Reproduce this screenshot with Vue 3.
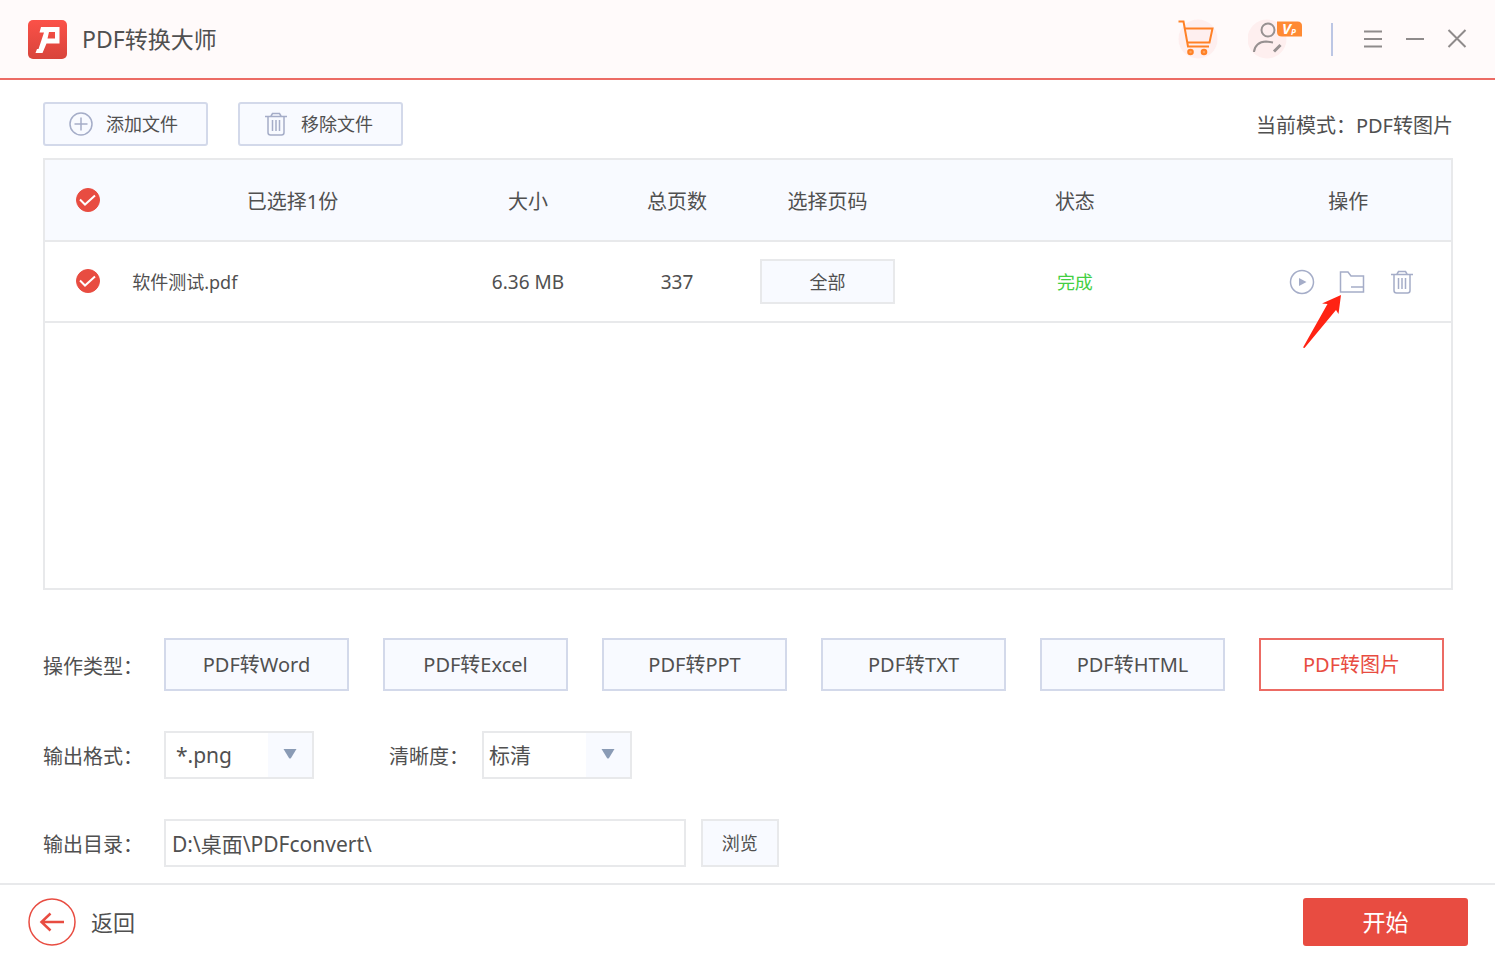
<script setup>
import { ref, computed } from 'vue'

const types = ['PDF转Word', 'PDF转Excel', 'PDF转PPT', 'PDF转TXT', 'PDF转HTML', 'PDF转图片']
const mode = ref('PDF转图片')
const files = ref([
  { name: '软件测试.pdf', size: '6.36 MB', pages: 337, range: '全部', status: '完成', checked: true }
])
const selected = computed(() => files.value.filter((f) => f.checked).length)
const allChecked = computed({
  get: () => selected.value === files.value.length,
  set: (v) => files.value.forEach((f) => (f.checked = v))
})
const format = ref('*.png')
const quality = ref('标清')
const folder = ref('D:\\桌面\\PDFconvert\\')
</script>

<template>
  <div class="app">
    <header class="titlebar">
      <svg class="logo" viewBox="0 0 39 39" aria-hidden="true">
        <defs>
          <linearGradient id="logo-bg" x1="0" y1="0" x2="0" y2="1">
            <stop offset="0" stop-color="#fb5148" />
            <stop offset="1" stop-color="#d8443b" />
          </linearGradient>
        </defs>
        <rect width="39" height="39" rx="5" fill="url(#logo-bg)" />
        <path fill="#fff" fill-rule="evenodd" d="M13 7H31.500V23.500H18.500L14.500 33H7.500L9 29H10.500L16 12.500H11.500Z M21 12L19.500 18.500H27V12Z" />
      </svg>
      <h1 class="title">PDF转换大师</h1>
      <button class="bare" type="button" aria-label="购物车">
        <svg width="40" height="40" viewBox="0 0 40 40" fill="none" stroke="#ff8126" stroke-width="2">
          <circle cx="20" cy="20" r="19.500" fill="#feefef" stroke="none" />
          <path d="M.5 2.500H5.500L10 27.500H31" />
          <path d="M6.500 9.500H34.500L31.500 23.500H9" />
          <circle cx="12.500" cy="33" r="2.300" fill="#ffa35c" />
          <circle cx="26" cy="33" r="2.300" fill="#ffa35c" />
        </svg>
      </button>
      <button class="bare user" type="button" aria-label="会员">
        <svg width="56" height="48" viewBox="0 -4 56 48" fill="none" stroke="#979191" stroke-width="2">
          <circle cx="19" cy="20" r="19.500" fill="#feefef" stroke="none" />
          <circle cx="20" cy="11" r="6.500" />
          <path d="M6 33C6.500 27 11 22.500 18 22.500L25 23.500" />
          <path d="M26 32.500L32.500 26" stroke-width="3" />
          <path d="M29 2.500H49.500Q54 2.500 54 7V17.500H34Q29 17.500 29 13Z" fill="#ff8a33" stroke="none" />
          <text x="34" y="15" class="badge-v">V</text>
          <text x="43" y="16" class="badge-p">P</text>
        </svg>
      </button>
      <span class="divider"></span>
      <div class="window-controls">
        <button class="bare" type="button" aria-label="菜单">
          <svg width="20" height="20" viewBox="0 0 20 20" stroke="#8f8b8b" stroke-width="2"><path d="M1 2.500H19M1 10H19M1 17.500H19" /></svg>
        </button>
        <button class="bare" type="button" aria-label="最小化">
          <svg width="20" height="20" viewBox="0 0 20 20" stroke="#8f8b8b" stroke-width="2"><path d="M1 10H19" /></svg>
        </button>
        <button class="bare" type="button" aria-label="关闭">
          <svg width="20" height="20" viewBox="0 0 20 20" stroke="#8f8b8b" stroke-width="2"><path d="M1.500 1L18.500 18M18.500 1L1.500 18" /></svg>
        </button>
      </div>
    </header>

    <main class="content">
      <div class="toolbar">
        <button class="tool" type="button">
          <svg width="24" height="24" viewBox="0 0 24 24" fill="none" stroke="#a5adc8" stroke-width="1.500">
            <circle cx="12" cy="12" r="11" /><path d="M5.500 12H18.500M12 5.500V18.500" />
          </svg>
          添加文件
        </button>
        <button class="tool" type="button">
          <svg width="24" height="24" viewBox="0 0 24 24" fill="none" stroke="#a5adc8" stroke-width="1.500">
            <path d="M1 4.500H23M7 4L8.500 1.500H15.500L17 4M4 5V20.500Q4 23 6.500 23H17.500Q20 23 20 20.500V5M8.500 8V19M12 8V19M15.500 8V19" />
          </svg>
          移除文件
        </button>
        <p class="mode">当前模式：{{ mode }}</p>
      </div>

      <div class="list">
        <table>
          <colgroup>
            <col class="c-check" /><col class="c-name" /><col class="c-size" /><col class="c-pages" />
            <col class="c-range" /><col class="c-status" /><col class="c-ops" />
          </colgroup>
          <thead>
            <tr>
              <th class="check-cell">
                <label class="check">
                  <input v-model="allChecked" type="checkbox" aria-label="全选" />
                  <svg viewBox="0 0 24 24" aria-hidden="true"><path d="M4 11.500L9 16.500L19 7.500" /></svg>
                </label>
              </th>
              <th>已选择{{ selected }}份</th>
              <th>大小</th>
              <th>总页数</th>
              <th>选择页码</th>
              <th>状态</th>
              <th>操作</th>
            </tr>
          </thead>
          <tbody>
            <tr v-for="f in files" :key="f.name">
              <td class="check-cell">
                <label class="check">
                  <input v-model="f.checked" type="checkbox" :aria-label="f.name" />
                  <svg viewBox="0 0 24 24" aria-hidden="true"><path d="M4 11.500L9 16.500L19 7.500" /></svg>
                </label>
              </td>
              <td class="name">{{ f.name }}</td>
              <td>{{ f.size }}</td>
              <td>{{ f.pages }}</td>
              <td><button class="range" type="button">{{ f.range }}</button></td>
              <td class="status">{{ f.status }}</td>
              <td>
                <div class="ops">
                  <button class="bare" type="button" aria-label="播放">
                    <svg width="26" height="26" viewBox="0 0 26 26" fill="none" stroke="#a5adc8" stroke-width="1.500">
                      <circle cx="13" cy="13" r="11.500" /><path d="M10 9L17.500 13L10 17Z" fill="#a5adc8" stroke="none" />
                    </svg>
                  </button>
                  <button class="bare folder" type="button" aria-label="打开文件夹">
                    <svg width="26" height="26" viewBox="0 0 26 26" fill="none" stroke="#a5adc8" stroke-width="1.500">
                      <path d="M1.500 3H9L12 7H24.500V23H1.500ZM12 18H24.500" />
                    </svg>
                    <svg class="arrow" width="40" height="56" viewBox="0 0 40 56" aria-hidden="true">
                      <path d="M39 1L20 9.500L25.500 10L1 53.500L2.500 54L34 16L36.500 20Z" fill="#ff2313" />
                    </svg>
                  </button>
                  <button class="bare" type="button" aria-label="删除">
                    <svg width="26" height="26" viewBox="-1 -1 26 26" fill="none" stroke="#a5adc8" stroke-width="1.500">
                      <path d="M1 4.500H23M7 4L8.500 1.500H15.500L17 4M4 5V20.500Q4 23 6.500 23H17.500Q20 23 20 20.500V5M8.500 8V19M12 8V19M15.500 8V19" />
                    </svg>
                  </button>
                </div>
              </td>
            </tr>
          </tbody>
        </table>
      </div>

      <div class="row types-row">
        <span id="type-label" class="label">操作类型：</span>
        <div class="types" role="group" aria-labelledby="type-label">
          <button
            v-for="t in types" :key="t" type="button" class="type"
            :class="{ active: t === mode }" :aria-pressed="t === mode" @click="mode = t"
          >{{ t }}</button>
        </div>
      </div>

      <div class="row">
        <label class="label" for="format">输出格式：</label>
        <div class="select">
          <select id="format" v-model="format" class="format">
            <option>*.png</option><option>*.jpg</option><option>*.bmp</option>
          </select>
          <span class="caret"><svg width="14" height="12" viewBox="0 0 14 12"><path d="M.5 0H13.500L8 9Q7 10 6 9Z" fill="#8a9bb5" /></svg></span>
        </div>
        <label class="label quality" for="quality">清晰度：</label>
        <div class="select">
          <select id="quality" v-model="quality">
            <option>标清</option><option>高清</option><option>超清</option>
          </select>
          <span class="caret"><svg width="14" height="12" viewBox="0 0 14 12"><path d="M.5 0H13.500L8 9Q7 10 6 9Z" fill="#8a9bb5" /></svg></span>
        </div>
      </div>

      <div class="row">
        <label class="label" for="folder">输出目录：</label>
        <input id="folder" v-model="folder" class="path" type="text" />
        <button class="browse" type="button">浏览</button>
      </div>
    </main>

    <footer class="footer">
      <button class="bare back" type="button">
        <svg width="48" height="48" viewBox="0 0 48 48" fill="none" stroke="#e84c41">
          <circle cx="24" cy="24" r="23" stroke-width="1.500" />
          <path d="M36 24H13M22.500 15.500L13.500 24L22.500 32.500" stroke-width="2.500" />
        </svg>
        返回
      </button>
      <button class="start" type="button">开始</button>
    </footer>
  </div>
</template>

<style>
body {
  margin: 0;
  background: #fff;
}
</style>

<style scoped>
* {
  box-sizing: border-box;
}
.app {
  display: flex;
  flex-direction: column;
  min-height: 100vh;
  font-family: "Noto Sans", "Noto Sans CJK SC", sans-serif;
  font-size: 20px;
  line-height: 28px;
  color: #505050;
}
button,
input,
select {
  font: inherit;
  color: inherit;
  margin: 0;
}
button {
  cursor: pointer;
}
svg {
  display: block;
  flex: none;
}
.bare {
  padding: 0;
  border: 0;
  background: none;
}

.titlebar {
  display: flex;
  align-items: center;
  height: 80px;
  padding: 0 28px;
  background: #fffafa;
  border-bottom: 2px solid #ec6b64;
}
.logo {
  width: 39px;
  height: 39px;
}
.title {
  flex: 1;
  margin: 0 0 0 15px;
  font-size: 23px;
  font-weight: 400;
}
.user {
  margin-left: 30px;
}
.badge-v,
.badge-p {
  fill: #fff;
  stroke: none;
  font-style: italic;
  font-weight: 700;
}
.badge-v {
  font-size: 15px;
}
.badge-p {
  font-size: 8px;
}
.divider {
  width: 2px;
  height: 33px;
  margin: 0 30px 0 27px;
  background: #bcc6e4;
}
.window-controls {
  display: flex;
  gap: 22px;
}

.content {
  flex: 1;
  display: flex;
  flex-direction: column;
  padding: 22px 42px 16px 43px;
}
.toolbar {
  display: flex;
  align-items: center;
  gap: 30px;
  margin-bottom: 12px;
}
.tool {
  display: flex;
  align-items: center;
  justify-content: center;
  gap: 13px;
  width: 165px;
  height: 44px;
  padding: 0 4px 0 0;
  font-size: 18px;
  background: #f8faff;
  border: 2px solid #d3d9ea;
  border-radius: 3px;
}
.mode {
  margin: 0 0 0 auto;
  padding-top: 4px;
}

.list {
  flex: 1;
  border: 2px solid #e8e9eb;
}
table {
  width: 100%;
  table-layout: fixed;
  border-collapse: collapse;
}
.c-check { width: 6.2%; }
.c-name { width: 22.8%; }
.c-size { width: 10.7%; }
.c-pages { width: 10.5%; }
.c-range { width: 10.9%; }
.c-status { width: 24.3%; }
.c-ops { width: 14.6%; }
th,
td {
  height: 81px;
  padding: 0;
  text-align: center;
  vertical-align: middle;
  border-bottom: 2px solid #e8e9eb;
}
th {
  padding-top: 4px;
  font-weight: 400;
  background: #f8faff;
}
td {
  font-size: 19px;
}
.check-cell {
  padding: 0 2px 4px 0;
}
.name {
  text-align: left;
}
.status {
  color: #43cf43;
}
.check {
  display: inline-grid;
  vertical-align: middle;
}
.check input {
  grid-area: 1 / 1;
  width: 24px;
  height: 24px;
  appearance: none;
  border: 1px solid #e84c41;
  border-radius: 50%;
}
.check input:checked {
  background: #e84c41;
}
.check svg {
  grid-area: 1 / 1;
  width: 24px;
  height: 24px;
  fill: none;
  stroke: #fff;
  stroke-width: 2;
  pointer-events: none;
}
.range {
  width: 135px;
  height: 45px;
  padding: 0;
  background: #f8faff;
  border: 2px solid #e8e9eb;
}
.name,
.range,
.browse,
.status {
  font-size: 18px;
}
.ops {
  display: flex;
  justify-content: center;
  gap: 24px;
  padding-left: 8px;
}
.folder {
  position: relative;
}
.arrow {
  position: absolute;
  top: 25px;
  right: 23px;
}

.row {
  display: flex;
  align-items: center;
  margin-top: 40px;
}
.types-row {
  margin-top: 48px;
}
.label {
  flex: none;
  width: 121px;
  padding-top: 4px;
  white-space: nowrap;
}
.label.quality {
  width: 93px;
  margin-left: 75px;
}
.types {
  flex: 1;
  display: grid;
  grid-template-columns: repeat(6, 1fr);
  gap: 34px;
  margin-right: 9px;
}
.type {
  height: 53px;
  padding: 0;
  background: #f8faff;
  border: 2px solid #d3d9ea;
}
.type.active {
  color: #e84c41;
  background: #fff;
  border-color: #ec6b64;
}
.select {
  position: relative;
  width: 150px;
  height: 48px;
}
.select select {
  width: 100%;
  height: 100%;
  padding: 0 48px 0 5px;
  font-size: 21px;
  appearance: none;
  background: #fff;
  border: 2px solid #e8e9eb;
  border-radius: 0;
}
.select .format {
  padding-left: 10px;
}
.caret {
  position: absolute;
  top: 2px;
  right: 2px;
  bottom: 2px;
  display: grid;
  place-items: center;
  width: 44px;
  background: #f8faff;
  pointer-events: none;
}
.path {
  width: 37%;
  height: 48px;
  padding: 0 6px;
  font-size: 21px;
  background: #fff;
  border: 2px solid #e8e9eb;
}
.browse {
  width: 78px;
  height: 48px;
  margin-left: 15px;
  padding: 0;
  background: #f8faff;
  border: 2px solid #e8e9eb;
}

.footer {
  display: flex;
  align-items: center;
  justify-content: space-between;
  padding: 13px 27px 10px 28px;
  font-size: 22px;
  border-top: 2px solid #e8e9eb;
}
.back {
  display: flex;
  align-items: center;
  gap: 15px;
}
.start {
  width: 165px;
  height: 48px;
  padding: 0;
  font-size: 23px;
  color: #fff;
  background: #e84c41;
  border: 0;
  border-radius: 3px;
}
</style>
